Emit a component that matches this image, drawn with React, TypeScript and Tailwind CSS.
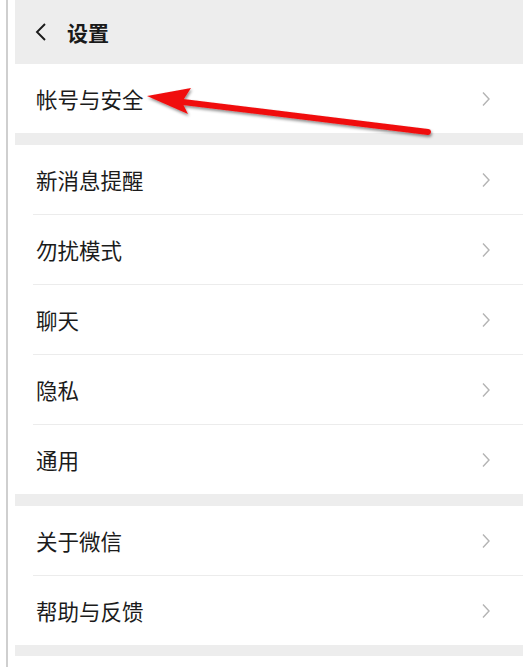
import React from "react";

const font = { fontFamily: '"Noto Sans CJK SC", "Noto Sans", sans-serif' };

function Chevron() {
  return (
    <svg width="10" height="16" viewBox="0 0 10 16" className="shrink-0">
      <path d="M2 1.5 L8 8 L2 14.5" fill="none" stroke="#b4b4b4" strokeWidth="1.4" />
    </svg>
  );
}

function Row({ label, divider }: { label: string; divider?: boolean }) {
  return (
    <div className="bg-white">
      <div className="flex h-[69px] items-center justify-between pl-[21px] pr-[32px]">
        <span className="text-[21.5px] text-[#1b1b1b] leading-none">{label}</span>
        <Chevron />
      </div>
      {divider && <div className="ml-[18px] h-px bg-[#ececec]" />}
    </div>
  );
}

export default function App() {
  return (
    <div className="relative flex h-[667px] w-[523px] bg-white overflow-hidden" style={font}>
      <div className="w-[15px] shrink-0 flex">
        <div className="ml-[6px] w-[2px] h-full bg-[#cfcfcf]" />
      </div>
      <div className="flex-1 flex flex-col">
        <div className="h-[64px] bg-[#ededed] flex items-center pl-[19px] gap-[19px]">
          <svg width="14" height="22" viewBox="0 0 14 22">
            <path d="M11 3 L3 11 L11 19" fill="none" stroke="#1a1a1a" strokeWidth="1.9" />
          </svg>
          <span className="text-[21px] font-semibold text-[#1a1a1a] leading-none">设置</span>
        </div>
        <Row label="帐号与安全" />
        <div className="h-[12px] bg-[#ededed]" />
        <Row label="新消息提醒" divider />
        <Row label="勿扰模式" divider />
        <Row label="聊天" divider />
        <Row label="隐私" divider />
        <Row label="通用" />
        <div className="h-[12px] bg-[#ededed]" />
        <Row label="关于微信" divider />
        <Row label="帮助与反馈" />
        <div className="h-[11px] bg-[#ededed]" />
        <div className="flex-1 bg-white" />
      </div>
      <svg className="absolute left-0 top-0 pointer-events-none" width="523" height="667">
        <defs>
          <filter id="sh" x="-10%" y="-50%" width="120%" height="200%">
            <feDropShadow dx="1" dy="2" stdDeviation="1.5" floodColor="#000" floodOpacity="0.45" />
          </filter>
        </defs>
        <g filter="url(#sh)">
          <path d="M428 132 L183 102" stroke="#f01010" strokeWidth="6" strokeLinecap="round" fill="none" />
          <path d="M147 96 L191 88 L182 102 L188 114 Z" fill="#f01010" />
        </g>
      </svg>
    </div>
  );
}
